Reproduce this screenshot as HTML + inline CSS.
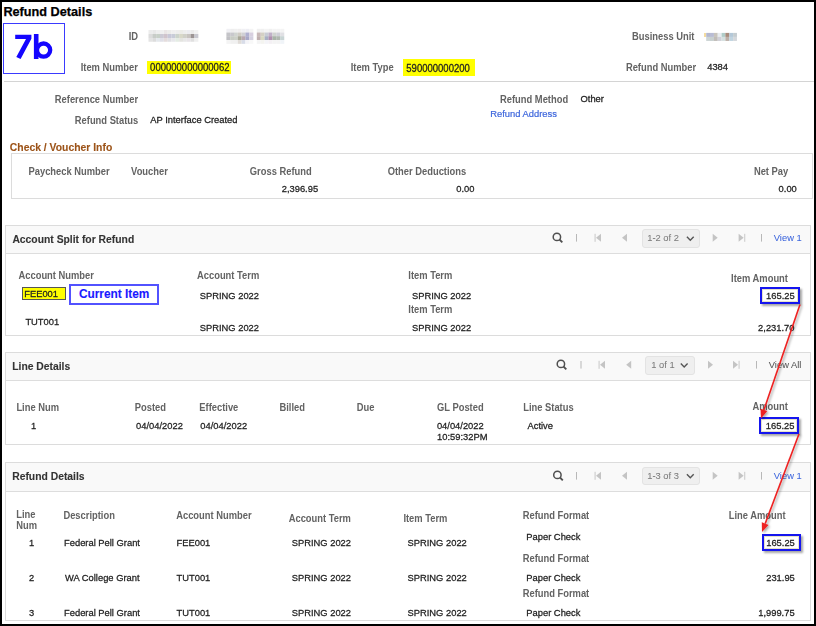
<!DOCTYPE html>
<html><head><meta charset="utf-8"><style>
html,body{margin:0;padding:0;}
body{width:816px;height:626px;position:relative;overflow:hidden;background:#fff;font-family:"Liberation Sans",sans-serif;}
.t{position:absolute;line-height:0;white-space:nowrap;transform-origin:0 0;}
</style></head><body>
<div style="position:absolute;left:0px;top:0px;width:816px;height:626px;box-sizing:border-box;border:2px solid #000;"></div><div style="position:absolute;left:3px;top:23px;width:62px;height:51px;box-sizing:border-box;border:1px solid #3a3aff;"></div><div style="position:absolute;left:4px;top:81px;width:810px;height:1px;background:#d4d4d4;"></div><div style="position:absolute;left:147px;top:61px;width:84px;height:13px;background:#ffff00;"></div><div style="position:absolute;left:402.5px;top:59px;width:72.0px;height:17px;background:#ffff00;"></div><div style="position:absolute;left:11px;top:153px;width:802px;height:46px;box-sizing:border-box;border:1px solid #dcdcdc;"></div><div style="position:absolute;left:5px;top:225px;width:806px;height:111px;box-sizing:border-box;border:1px solid #dcdcdc;"></div><div style="position:absolute;left:6px;top:226px;width:804px;height:27px;background:#f9f9f9;border-bottom:1px solid #dddddd;"></div><div style="position:absolute;left:5px;top:352px;width:806px;height:93px;box-sizing:border-box;border:1px solid #dcdcdc;"></div><div style="position:absolute;left:6px;top:353px;width:804px;height:27px;background:#f9f9f9;border-bottom:1px solid #dddddd;"></div><div style="position:absolute;left:5px;top:462px;width:806px;height:159px;box-sizing:border-box;border:1px solid #dcdcdc;"></div><div style="position:absolute;left:6px;top:463px;width:804px;height:28px;background:#f9f9f9;border-bottom:1px solid #dddddd;"></div><div style="position:absolute;left:22px;top:287px;width:44px;height:13px;box-sizing:border-box;border:1px solid #555;background:#ffff00;"></div><div style="position:absolute;left:69px;top:284px;width:90px;height:21px;box-sizing:border-box;border:2px solid #5252ff;"></div><div style="position:absolute;left:760px;top:287px;width:40px;height:17px;box-sizing:border-box;border:2px solid #1515ee;box-shadow:2px 2px 2px rgba(0,0,0,0.35), inset 0 0 0 1px #e6e2c8;background:#fff;"></div><div style="position:absolute;left:759px;top:417px;width:40px;height:17px;box-sizing:border-box;border:2px solid #1515ee;box-shadow:2px 2px 2px rgba(0,0,0,0.35), inset 0 0 0 1px #e6e2c8;background:#fff;"></div><div style="position:absolute;left:762px;top:534px;width:39px;height:17px;box-sizing:border-box;border:2px solid #1515ee;box-shadow:2px 2px 2px rgba(0,0,0,0.35), inset 0 0 0 1px #e6e2c8;background:#fff;"></div><div style="position:absolute;left:642px;top:229px;width:58px;height:19px;box-sizing:border-box;border:1px solid #e3e3e3;background:#efefef;border-radius:3px;"></div><div style="position:absolute;left:645px;top:356px;width:50px;height:19px;box-sizing:border-box;border:1px solid #e3e3e3;background:#efefef;border-radius:3px;"></div><div style="position:absolute;left:642px;top:467px;width:58px;height:18px;box-sizing:border-box;border:1px solid #e3e3e3;background:#efefef;border-radius:3px;"></div>
<div class="t" style="left:3.40px;top:12px;font-size:12.7px;-webkit-text-stroke:0.25px currentColor;font-weight:bold;color:#000">Refund Details</div><div class="t" style="left:128.70px;top:37px;font-size:9.370px;transform:scale(1.0,1.12);-webkit-text-stroke:0.0px currentColor;font-weight:bold;color:#636363">ID</div><div class="t" style="left:80.70px;top:68px;font-size:9.370px;transform:scale(1.0,1.12);-webkit-text-stroke:0.0px currentColor;font-weight:bold;color:#636363">Item Number</div><div class="t" style="left:150.10px;top:68px;font-size:9.530px;transform:scale(1.0,1.06);-webkit-text-stroke:0.25px currentColor;color:#222222">000000000000062</div><div class="t" style="left:350.70px;top:68px;font-size:9.370px;transform:scale(1.0,1.12);-webkit-text-stroke:0.0px currentColor;font-weight:bold;color:#636363">Item Type</div><div class="t" style="left:406.30px;top:69px;font-size:9.530px;transform:scale(1.0,1.06);-webkit-text-stroke:0.25px currentColor;color:#222222">590000000200</div><div class="t" style="left:632.00px;top:37px;font-size:9.370px;transform:scale(1.0,1.12);-webkit-text-stroke:0.0px currentColor;font-weight:bold;color:#636363">Business Unit</div><div class="t" style="left:625.90px;top:68px;font-size:9.370px;transform:scale(1.0,1.12);-webkit-text-stroke:0.0px currentColor;font-weight:bold;color:#636363">Refund Number</div><div class="t" style="left:707.20px;top:67px;font-size:9.370px;transform:scale(1.0,1.06);-webkit-text-stroke:0.25px currentColor;color:#222222">4384</div><div class="t" style="left:54.80px;top:100px;font-size:9.370px;transform:scale(1.0,1.12);-webkit-text-stroke:0.0px currentColor;font-weight:bold;color:#636363">Reference Number</div><div class="t" style="left:74.80px;top:121px;font-size:9.370px;transform:scale(1.0,1.12);-webkit-text-stroke:0.0px currentColor;font-weight:bold;color:#636363">Refund Status</div><div class="t" style="left:150.30px;top:120px;font-size:9.370px;transform:scale(1.0,1.06);-webkit-text-stroke:0.25px currentColor;color:#222222">AP Interface Created</div><div class="t" style="left:500.00px;top:100px;font-size:9.370px;transform:scale(1.0,1.12);-webkit-text-stroke:0.0px currentColor;font-weight:bold;color:#636363">Refund Method</div><div class="t" style="left:580.50px;top:99px;font-size:9.370px;transform:scale(1.0,1.06);-webkit-text-stroke:0.25px currentColor;color:#222222">Other</div><div class="t" style="left:490.30px;top:114px;font-size:9.370px;transform:scale(1.0,1.06);-webkit-text-stroke:0.2px currentColor;color:#3d66dc">Refund Address</div><div class="t" style="left:9.80px;top:148px;font-size:10.380px;transform:scale(1.0,1.06);-webkit-text-stroke:0.1px currentColor;font-weight:bold;color:#9c5318">Check / Voucher Info</div><div class="t" style="left:28.50px;top:172px;font-size:9.370px;transform:scale(1.0,1.12);-webkit-text-stroke:0.0px currentColor;font-weight:bold;color:#636363">Paycheck Number</div><div class="t" style="left:131.10px;top:172px;font-size:9.370px;transform:scale(1.0,1.12);-webkit-text-stroke:0.0px currentColor;font-weight:bold;color:#636363">Voucher</div><div class="t" style="left:249.80px;top:172px;font-size:9.370px;transform:scale(1.0,1.12);-webkit-text-stroke:0.0px currentColor;font-weight:bold;color:#636363">Gross Refund</div><div class="t" style="left:281.70px;top:189px;font-size:9.370px;transform:scale(1.0,1.06);-webkit-text-stroke:0.25px currentColor;color:#222222">2,396.95</div><div class="t" style="left:387.70px;top:172px;font-size:9.370px;transform:scale(1.0,1.12);-webkit-text-stroke:0.0px currentColor;font-weight:bold;color:#636363">Other Deductions</div><div class="t" style="left:456.30px;top:189px;font-size:9.370px;transform:scale(1.0,1.06);-webkit-text-stroke:0.25px currentColor;color:#222222">0.00</div><div class="t" style="left:753.90px;top:172px;font-size:9.370px;transform:scale(1.0,1.12);-webkit-text-stroke:0.0px currentColor;font-weight:bold;color:#636363">Net Pay</div><div class="t" style="left:778.60px;top:189px;font-size:9.370px;transform:scale(1.0,1.06);-webkit-text-stroke:0.25px currentColor;color:#222222">0.00</div><div class="t" style="left:12.40px;top:240px;font-size:10.350px;transform:scale(1.0,1.06);-webkit-text-stroke:0.1px currentColor;font-weight:bold;color:#333333">Account Split for Refund</div><div class="t" style="left:18.50px;top:276px;font-size:9.370px;transform:scale(1.0,1.12);-webkit-text-stroke:0.0px currentColor;font-weight:bold;color:#636363">Account Number</div><div class="t" style="left:24.20px;top:294px;font-size:9.370px;transform:scale(1.0,1.06);-webkit-text-stroke:0.25px currentColor;color:#222222">FEE001</div><div class="t" style="left:78.90px;top:294px;font-size:11.87px;-webkit-text-stroke:0.1px currentColor;font-weight:bold;color:#1a1aff">Current Item</div><div class="t" style="left:25.40px;top:322px;font-size:9.370px;transform:scale(1.0,1.06);-webkit-text-stroke:0.25px currentColor;color:#222222">TUT001</div><div class="t" style="left:197.00px;top:276px;font-size:9.370px;transform:scale(1.0,1.12);-webkit-text-stroke:0.0px currentColor;font-weight:bold;color:#636363">Account Term</div><div class="t" style="left:199.70px;top:296px;font-size:9.370px;transform:scale(1.0,1.06);-webkit-text-stroke:0.25px currentColor;color:#222222">SPRING 2022</div><div class="t" style="left:408.30px;top:276px;font-size:9.370px;transform:scale(1.0,1.12);-webkit-text-stroke:0.0px currentColor;font-weight:bold;color:#636363">Item Term</div><div class="t" style="left:411.90px;top:296px;font-size:9.370px;transform:scale(1.0,1.06);-webkit-text-stroke:0.25px currentColor;color:#222222">SPRING 2022</div><div class="t" style="left:408.30px;top:310px;font-size:9.370px;transform:scale(1.0,1.12);-webkit-text-stroke:0.0px currentColor;font-weight:bold;color:#636363">Item Term</div><div class="t" style="left:199.70px;top:328px;font-size:9.370px;transform:scale(1.0,1.06);-webkit-text-stroke:0.25px currentColor;color:#222222">SPRING 2022</div><div class="t" style="left:411.90px;top:328px;font-size:9.370px;transform:scale(1.0,1.06);-webkit-text-stroke:0.25px currentColor;color:#222222">SPRING 2022</div><div class="t" style="left:731.10px;top:279px;font-size:9.370px;transform:scale(1.0,1.12);-webkit-text-stroke:0.0px currentColor;font-weight:bold;color:#636363">Item Amount</div><div class="t" style="left:766.10px;top:296px;font-size:9.370px;transform:scale(1.0,1.06);-webkit-text-stroke:0.25px currentColor;color:#222222">165.25</div><div class="t" style="left:758.10px;top:328px;font-size:9.370px;transform:scale(1.0,1.06);-webkit-text-stroke:0.25px currentColor;color:#222222">2,231.70</div><div class="t" style="left:12.20px;top:367px;font-size:10.350px;transform:scale(1.0,1.06);-webkit-text-stroke:0.1px currentColor;font-weight:bold;color:#333333">Line Details</div><div class="t" style="left:16.40px;top:408px;font-size:9.370px;transform:scale(1.0,1.12);-webkit-text-stroke:0.0px currentColor;font-weight:bold;color:#636363">Line Num</div><div class="t" style="left:30.90px;top:426px;font-size:9.370px;transform:scale(1.0,1.06);-webkit-text-stroke:0.25px currentColor;color:#222222">1</div><div class="t" style="left:134.80px;top:408px;font-size:9.370px;transform:scale(1.0,1.12);-webkit-text-stroke:0.0px currentColor;font-weight:bold;color:#636363">Posted</div><div class="t" style="left:136.00px;top:426px;font-size:9.370px;transform:scale(1.0,1.06);-webkit-text-stroke:0.25px currentColor;color:#222222">04/04/2022</div><div class="t" style="left:199.30px;top:408px;font-size:9.370px;transform:scale(1.0,1.12);-webkit-text-stroke:0.0px currentColor;font-weight:bold;color:#636363">Effective</div><div class="t" style="left:200.30px;top:426px;font-size:9.370px;transform:scale(1.0,1.06);-webkit-text-stroke:0.25px currentColor;color:#222222">04/04/2022</div><div class="t" style="left:279.50px;top:408px;font-size:9.370px;transform:scale(1.0,1.12);-webkit-text-stroke:0.0px currentColor;font-weight:bold;color:#636363">Billed</div><div class="t" style="left:356.70px;top:408px;font-size:9.370px;transform:scale(1.0,1.12);-webkit-text-stroke:0.0px currentColor;font-weight:bold;color:#636363">Due</div><div class="t" style="left:437.00px;top:408px;font-size:9.370px;transform:scale(1.0,1.12);-webkit-text-stroke:0.0px currentColor;font-weight:bold;color:#636363">GL Posted</div><div class="t" style="left:436.90px;top:426px;font-size:9.370px;transform:scale(1.0,1.06);-webkit-text-stroke:0.25px currentColor;color:#222222">04/04/2022</div><div class="t" style="left:437.10px;top:437px;font-size:9.370px;transform:scale(1.0,1.06);-webkit-text-stroke:0.25px currentColor;color:#222222">10:59:32PM</div><div class="t" style="left:523.20px;top:408px;font-size:9.370px;transform:scale(1.0,1.12);-webkit-text-stroke:0.0px currentColor;font-weight:bold;color:#636363">Line Status</div><div class="t" style="left:527.50px;top:426px;font-size:9.370px;transform:scale(1.0,1.06);-webkit-text-stroke:0.25px currentColor;color:#222222">Active</div><div class="t" style="left:752.50px;top:407px;font-size:9.370px;transform:scale(1.0,1.12);-webkit-text-stroke:0.0px currentColor;font-weight:bold;color:#636363">Amount</div><div class="t" style="left:765.80px;top:426px;font-size:9.370px;transform:scale(1.0,1.06);-webkit-text-stroke:0.25px currentColor;color:#222222">165.25</div><div class="t" style="left:12.20px;top:477px;font-size:10.350px;transform:scale(1.0,1.06);-webkit-text-stroke:0.1px currentColor;font-weight:bold;color:#333333">Refund Details</div><div class="t" style="left:16.30px;top:515px;font-size:9.370px;transform:scale(1.0,1.12);-webkit-text-stroke:0.0px currentColor;font-weight:bold;color:#636363">Line</div><div class="t" style="left:16.30px;top:526px;font-size:9.370px;transform:scale(1.0,1.12);-webkit-text-stroke:0.0px currentColor;font-weight:bold;color:#636363">Num</div><div class="t" style="left:63.40px;top:516px;font-size:9.370px;transform:scale(1.0,1.12);-webkit-text-stroke:0.0px currentColor;font-weight:bold;color:#636363">Description</div><div class="t" style="left:176.20px;top:516px;font-size:9.370px;transform:scale(1.0,1.12);-webkit-text-stroke:0.0px currentColor;font-weight:bold;color:#636363">Account Number</div><div class="t" style="left:288.70px;top:519px;font-size:9.370px;transform:scale(1.0,1.12);-webkit-text-stroke:0.0px currentColor;font-weight:bold;color:#636363">Account Term</div><div class="t" style="left:403.40px;top:519px;font-size:9.370px;transform:scale(1.0,1.12);-webkit-text-stroke:0.0px currentColor;font-weight:bold;color:#636363">Item Term</div><div class="t" style="left:522.70px;top:516px;font-size:9.370px;transform:scale(1.0,1.12);-webkit-text-stroke:0.0px currentColor;font-weight:bold;color:#636363">Refund Format</div><div class="t" style="left:728.80px;top:516px;font-size:9.370px;transform:scale(1.0,1.12);-webkit-text-stroke:0.0px currentColor;font-weight:bold;color:#636363">Line Amount</div><div class="t" style="left:28.90px;top:543px;font-size:9.370px;transform:scale(1.0,1.06);-webkit-text-stroke:0.25px currentColor;color:#222222">1</div><div class="t" style="left:64.00px;top:543px;font-size:9.370px;transform:scale(1.0,1.06);-webkit-text-stroke:0.25px currentColor;color:#222222">Federal Pell Grant</div><div class="t" style="left:176.50px;top:543px;font-size:9.370px;transform:scale(1.0,1.06);-webkit-text-stroke:0.25px currentColor;color:#222222">FEE001</div><div class="t" style="left:291.70px;top:543px;font-size:9.370px;transform:scale(1.0,1.06);-webkit-text-stroke:0.25px currentColor;color:#222222">SPRING 2022</div><div class="t" style="left:407.50px;top:543px;font-size:9.370px;transform:scale(1.0,1.06);-webkit-text-stroke:0.25px currentColor;color:#222222">SPRING 2022</div><div class="t" style="left:526.30px;top:537px;font-size:9.370px;transform:scale(1.0,1.06);-webkit-text-stroke:0.25px currentColor;color:#222222">Paper Check</div><div class="t" style="left:766.20px;top:543px;font-size:9.370px;transform:scale(1.0,1.06);-webkit-text-stroke:0.25px currentColor;color:#222222">165.25</div><div class="t" style="left:29.10px;top:578px;font-size:9.370px;transform:scale(1.0,1.06);-webkit-text-stroke:0.25px currentColor;color:#222222">2</div><div class="t" style="left:65.00px;top:578px;font-size:9.370px;transform:scale(1.0,1.06);-webkit-text-stroke:0.25px currentColor;color:#222222">WA College Grant</div><div class="t" style="left:176.50px;top:578px;font-size:9.370px;transform:scale(1.0,1.06);-webkit-text-stroke:0.25px currentColor;color:#222222">TUT001</div><div class="t" style="left:291.70px;top:578px;font-size:9.370px;transform:scale(1.0,1.06);-webkit-text-stroke:0.25px currentColor;color:#222222">SPRING 2022</div><div class="t" style="left:407.50px;top:578px;font-size:9.370px;transform:scale(1.0,1.06);-webkit-text-stroke:0.25px currentColor;color:#222222">SPRING 2022</div><div class="t" style="left:526.30px;top:578px;font-size:9.370px;transform:scale(1.0,1.06);-webkit-text-stroke:0.25px currentColor;color:#222222">Paper Check</div><div class="t" style="left:522.70px;top:559px;font-size:9.370px;transform:scale(1.0,1.12);-webkit-text-stroke:0.0px currentColor;font-weight:bold;color:#636363">Refund Format</div><div class="t" style="left:766.20px;top:578px;font-size:9.370px;transform:scale(1.0,1.06);-webkit-text-stroke:0.25px currentColor;color:#222222">231.95</div><div class="t" style="left:29.10px;top:613px;font-size:9.370px;transform:scale(1.0,1.06);-webkit-text-stroke:0.25px currentColor;color:#222222">3</div><div class="t" style="left:64.00px;top:613px;font-size:9.370px;transform:scale(1.0,1.06);-webkit-text-stroke:0.25px currentColor;color:#222222">Federal Pell Grant</div><div class="t" style="left:176.50px;top:613px;font-size:9.370px;transform:scale(1.0,1.06);-webkit-text-stroke:0.25px currentColor;color:#222222">TUT001</div><div class="t" style="left:291.70px;top:613px;font-size:9.370px;transform:scale(1.0,1.06);-webkit-text-stroke:0.25px currentColor;color:#222222">SPRING 2022</div><div class="t" style="left:407.50px;top:613px;font-size:9.370px;transform:scale(1.0,1.06);-webkit-text-stroke:0.25px currentColor;color:#222222">SPRING 2022</div><div class="t" style="left:526.30px;top:613px;font-size:9.370px;transform:scale(1.0,1.06);-webkit-text-stroke:0.25px currentColor;color:#222222">Paper Check</div><div class="t" style="left:522.70px;top:594px;font-size:9.370px;transform:scale(1.0,1.12);-webkit-text-stroke:0.0px currentColor;font-weight:bold;color:#636363">Refund Format</div><div class="t" style="left:758.20px;top:613px;font-size:9.370px;transform:scale(1.0,1.06);-webkit-text-stroke:0.25px currentColor;color:#222222">1,999.75</div><div class="t" style="left:647.20px;top:238px;font-size:9.370px;transform:scale(1.0,1.06);-webkit-text-stroke:0.05px currentColor;color:#7a7a7a">1-2 of 2</div><div class="t" style="left:651.20px;top:365px;font-size:9.370px;transform:scale(1.0,1.06);-webkit-text-stroke:0.05px currentColor;color:#7a7a7a">1 of 1</div><div class="t" style="left:647.20px;top:476px;font-size:9.370px;transform:scale(1.0,1.06);-webkit-text-stroke:0.05px currentColor;color:#7a7a7a">1-3 of 3</div><div class="t" style="left:773.80px;top:238px;font-size:9.370px;transform:scale(1.0,1.06);-webkit-text-stroke:0.05px currentColor;color:#3d66dc">View 1</div><div class="t" style="left:768.80px;top:365px;font-size:9.370px;transform:scale(1.0,1.06);-webkit-text-stroke:0.05px currentColor;color:#555555">View All</div><div class="t" style="left:773.80px;top:476px;font-size:9.370px;transform:scale(1.0,1.06);-webkit-text-stroke:0.05px currentColor;color:#3d66dc">View 1</div>
<svg width="816" height="626" style="position:absolute;left:0;top:0">
<defs><filter id="bl" x="-10%" y="-30%" width="120%" height="160%"><feGaussianBlur stdDeviation="0.7"/></filter><filter id="sh" x="-20%" y="-20%" width="140%" height="140%"><feDropShadow dx="1.5" dy="1.5" stdDeviation="0.8" flood-color="#000" flood-opacity="0.35"/></filter></defs>
<g filter="url(#bl)"><rect x="148.5" y="30" width="3.88" height="4.05" fill="#ececec"/><rect x="152.33" y="30" width="3.88" height="4.05" fill="#e8e8e8"/><rect x="156.16" y="30" width="3.88" height="4.05" fill="#eeeeee"/><rect x="159.99" y="30" width="3.88" height="4.05" fill="#f0f0f0"/><rect x="163.82" y="30" width="3.88" height="4.05" fill="#eae6e6"/><rect x="167.65" y="30" width="3.88" height="4.05" fill="#ececea"/><rect x="171.48" y="30" width="3.89" height="4.05" fill="#f0f0f0"/><rect x="175.32" y="30" width="3.88" height="4.05" fill="#eeeeee"/><rect x="179.15" y="30" width="3.88" height="4.05" fill="#ecece8"/><rect x="182.98" y="30" width="3.88" height="4.05" fill="#eeeeee"/><rect x="186.81" y="30" width="3.88" height="4.05" fill="#ececf0"/><rect x="190.64" y="30" width="3.88" height="4.05" fill="#ebebeb"/><rect x="194.47" y="30" width="3.88" height="4.05" fill="#f2f2f2"/><rect x="148.5" y="34" width="3.88" height="4.05" fill="#dcdcdc"/><rect x="152.33" y="34" width="3.88" height="4.05" fill="#c8ccc8"/><rect x="156.16" y="34" width="3.88" height="4.05" fill="#c8d0c8"/><rect x="159.99" y="34" width="3.88" height="4.05" fill="#cccad4"/><rect x="163.82" y="34" width="3.88" height="4.05" fill="#d0c4cc"/><rect x="167.65" y="34" width="3.88" height="4.05" fill="#c8c8d8"/><rect x="171.48" y="34" width="3.89" height="4.05" fill="#c8ccd8"/><rect x="175.32" y="34" width="3.88" height="4.05" fill="#ccd4cc"/><rect x="179.15" y="34" width="3.88" height="4.05" fill="#d8d8c8"/><rect x="182.98" y="34" width="3.88" height="4.05" fill="#d0d0c8"/><rect x="186.81" y="34" width="3.88" height="4.05" fill="#c8c4c0"/><rect x="190.64" y="34" width="3.88" height="4.05" fill="#9c9494"/><rect x="194.47" y="34" width="3.88" height="4.05" fill="#c8c8d0"/><rect x="148.5" y="38" width="3.88" height="3.75" fill="#e4e4e4"/><rect x="152.33" y="38" width="3.88" height="3.75" fill="#dcdcdc"/><rect x="156.16" y="38" width="3.88" height="3.75" fill="#e4e8ec"/><rect x="159.99" y="38" width="3.88" height="3.75" fill="#e0e0e8"/><rect x="163.82" y="38" width="3.88" height="3.75" fill="#e4dcdc"/><rect x="167.65" y="38" width="3.88" height="3.75" fill="#e0e0e4"/><rect x="171.48" y="38" width="3.89" height="3.75" fill="#e8e8ec"/><rect x="175.32" y="38" width="3.88" height="3.75" fill="#e4ece4"/><rect x="179.15" y="38" width="3.88" height="3.75" fill="#e4e4e0"/><rect x="182.98" y="38" width="3.88" height="3.75" fill="#e8e8e8"/><rect x="186.81" y="38" width="3.88" height="3.75" fill="#e8e4e8"/><rect x="190.64" y="38" width="3.88" height="3.75" fill="#e0e0e0"/><rect x="194.47" y="38" width="3.88" height="3.75" fill="#f0f0f0"/><rect x="226.4" y="28.8" width="3.85" height="3.75" fill="#f0f0f4"/><rect x="230.2" y="28.8" width="3.85" height="3.75" fill="#eeeeee"/><rect x="234.0" y="28.8" width="3.85" height="3.75" fill="#f0f0f0"/><rect x="237.8" y="28.8" width="3.85" height="3.75" fill="#f0eeee"/><rect x="241.6" y="28.8" width="3.85" height="3.75" fill="#f0f0f4"/><rect x="245.4" y="28.8" width="3.85" height="3.75" fill="#eeeef4"/><rect x="249.2" y="28.8" width="4.15" height="3.75" fill="#f4f4f4"/><rect x="226.4" y="32.5" width="3.85" height="3.75" fill="#c4c4c8"/><rect x="230.2" y="32.5" width="3.85" height="3.75" fill="#c8c8cc"/><rect x="234.0" y="32.5" width="3.85" height="3.75" fill="#d0d4d0"/><rect x="237.8" y="32.5" width="3.85" height="3.75" fill="#d0ccc4"/><rect x="241.6" y="32.5" width="3.85" height="3.75" fill="#d0d0d4"/><rect x="245.4" y="32.5" width="3.85" height="3.75" fill="#b0b0d0"/><rect x="249.2" y="32.5" width="4.15" height="3.75" fill="#d8d0e0"/><rect x="226.4" y="36.2" width="3.85" height="3.85" fill="#c0c0c4"/><rect x="230.2" y="36.2" width="3.85" height="3.85" fill="#c8ccc4"/><rect x="234.0" y="36.2" width="3.85" height="3.85" fill="#ccd0c8"/><rect x="237.8" y="36.2" width="3.85" height="3.85" fill="#a8a898"/><rect x="241.6" y="36.2" width="3.85" height="3.85" fill="#b8a8b0"/><rect x="245.4" y="36.2" width="3.85" height="3.85" fill="#a8a8c8"/><rect x="249.2" y="36.2" width="4.15" height="3.85" fill="#d4d0e0"/><rect x="226.4" y="40" width="3.85" height="3.85" fill="#f4f4f4"/><rect x="230.2" y="40" width="3.85" height="3.85" fill="#f0f0f0"/><rect x="234.0" y="40" width="3.85" height="3.85" fill="#f0f0f0"/><rect x="237.8" y="40" width="3.85" height="3.85" fill="#e0dcd8"/><rect x="241.6" y="40" width="3.85" height="3.85" fill="#d8dce8"/><rect x="245.4" y="40" width="3.85" height="3.85" fill="#f4f4f8"/><rect x="249.2" y="40" width="4.15" height="3.85" fill="#f8f8f8"/><rect x="256.8" y="28.8" width="3.95" height="3.75" fill="#f0f0f0"/><rect x="260.7" y="28.8" width="3.95" height="3.75" fill="#f0f0f0"/><rect x="264.6" y="28.8" width="3.95" height="3.75" fill="#f4f4f4"/><rect x="268.5" y="28.8" width="3.95" height="3.75" fill="#f0f0f0"/><rect x="272.4" y="28.8" width="3.95" height="3.75" fill="#f4f4f4"/><rect x="276.3" y="28.8" width="3.95" height="3.75" fill="#f4f4f4"/><rect x="280.2" y="28.8" width="4.05" height="3.75" fill="#f4f4f4"/><rect x="256.8" y="32.5" width="3.95" height="3.75" fill="#c8b8b8"/><rect x="260.7" y="32.5" width="3.95" height="3.75" fill="#d4d0c4"/><rect x="264.6" y="32.5" width="3.95" height="3.75" fill="#c8ccd4"/><rect x="268.5" y="32.5" width="3.95" height="3.75" fill="#c0b0c8"/><rect x="272.4" y="32.5" width="3.95" height="3.75" fill="#d0d4d0"/><rect x="276.3" y="32.5" width="3.95" height="3.75" fill="#d0d0d8"/><rect x="280.2" y="32.5" width="4.05" height="3.75" fill="#e0e0e4"/><rect x="256.8" y="36.2" width="3.95" height="3.85" fill="#c0b0b0"/><rect x="260.7" y="36.2" width="3.95" height="3.85" fill="#d8d8c0"/><rect x="264.6" y="36.2" width="3.95" height="3.85" fill="#a8b0c4"/><rect x="268.5" y="36.2" width="3.95" height="3.85" fill="#b090b0"/><rect x="272.4" y="36.2" width="3.95" height="3.85" fill="#a8b4a8"/><rect x="276.3" y="36.2" width="3.95" height="3.85" fill="#b0b8b0"/><rect x="280.2" y="36.2" width="4.05" height="3.85" fill="#c8d4d4"/><rect x="256.8" y="40" width="3.95" height="3.85" fill="#f4f4f4"/><rect x="260.7" y="40" width="3.95" height="3.85" fill="#f4f4f0"/><rect x="264.6" y="40" width="3.95" height="3.85" fill="#f4f4f8"/><rect x="268.5" y="40" width="3.95" height="3.85" fill="#f4f0f4"/><rect x="272.4" y="40" width="3.95" height="3.85" fill="#f4f4f4"/><rect x="276.3" y="40" width="3.95" height="3.85" fill="#f4f4f4"/><rect x="280.2" y="40" width="4.05" height="3.85" fill="#f0f4f8"/><rect x="706.2" y="32.9" width="3.85" height="4.05" fill="#b4b8d0"/><rect x="710.0" y="32.9" width="3.95" height="4.05" fill="#b8bcd4"/><rect x="713.9" y="32.9" width="3.85" height="4.05" fill="#c8c4bc"/><rect x="717.7" y="32.9" width="3.95" height="4.05" fill="#e8ecf0"/><rect x="721.6" y="32.9" width="3.85" height="4.05" fill="#b0ccc8"/><rect x="725.4" y="32.9" width="3.95" height="4.05" fill="#a88c7c"/><rect x="729.3" y="32.9" width="3.85" height="4.05" fill="#b4c8d8"/><rect x="733.1" y="32.9" width="3.85" height="4.05" fill="#c4ccd0"/><rect x="706.2" y="36.9" width="3.85" height="4.05" fill="#ccd4d4"/><rect x="710.0" y="36.9" width="3.95" height="4.05" fill="#c8d0d0"/><rect x="713.9" y="36.9" width="3.85" height="4.05" fill="#c0bcb8"/><rect x="717.7" y="36.9" width="3.95" height="4.05" fill="#d0d0d8"/><rect x="721.6" y="36.9" width="3.85" height="4.05" fill="#d4e0e0"/><rect x="725.4" y="36.9" width="3.95" height="4.05" fill="#bcb0a8"/><rect x="729.3" y="36.9" width="3.85" height="4.05" fill="#c0d4e0"/><rect x="733.1" y="36.9" width="3.85" height="4.05" fill="#d4d8dc"/><rect x="704" y="33" width="2" height="4" fill="#f4dca0"/></g>
<circle cx="556.9" cy="236.9" r="3.7" fill="none" stroke="#505050" stroke-width="1.5"/><line x1="559.5" y1="239.5" x2="562.3" y2="242.3" stroke="#505050" stroke-width="1.8"/><rect x="576" y="234.0" width="1" height="7.6" fill="#b8b8b8"/><rect x="761" y="234.0" width="1" height="7.6" fill="#b8b8b8"/><rect x="594.5" y="233.8" width="1.2" height="8" fill="#d0d0d0"/><path d="M601.0 233.8 L596.0 237.8 L601.0 241.8 Z" fill="#c4c4c4"/><path d="M627 233.8 L622 237.8 L627 241.8 Z" fill="#c4c4c4"/><path d="M712.7 233.8 L717.7 237.8 L712.7 241.8 Z" fill="#c4c4c4"/><path d="M738.6 233.8 L743.6 237.8 L738.6 241.8 Z" fill="#c4c4c4"/><rect x="744.1" y="233.8" width="1.2" height="8" fill="#d0d0d0"/><circle cx="560.9" cy="363.90000000000003" r="3.7" fill="none" stroke="#505050" stroke-width="1.5"/><line x1="563.5" y1="366.50000000000006" x2="566.3" y2="369.3" stroke="#505050" stroke-width="1.8"/><rect x="580.5" y="361.0" width="1" height="7.6" fill="#b8b8b8"/><rect x="756" y="361.0" width="1" height="7.6" fill="#b8b8b8"/><rect x="598.5" y="360.8" width="1.2" height="8" fill="#d0d0d0"/><path d="M605.0 360.8 L600.0 364.8 L605.0 368.8 Z" fill="#c4c4c4"/><path d="M631.2 360.8 L626.2 364.8 L631.2 368.8 Z" fill="#c4c4c4"/><path d="M708 360.8 L713 364.8 L708 368.8 Z" fill="#c4c4c4"/><path d="M733 360.8 L738 364.8 L733 368.8 Z" fill="#c4c4c4"/><rect x="738.5" y="360.8" width="1.2" height="8" fill="#d0d0d0"/><circle cx="557.4" cy="474.90000000000003" r="3.7" fill="none" stroke="#505050" stroke-width="1.5"/><line x1="560.0" y1="477.50000000000006" x2="562.8" y2="480.3" stroke="#505050" stroke-width="1.8"/><rect x="576" y="472.0" width="1" height="7.6" fill="#b8b8b8"/><rect x="761" y="472.0" width="1" height="7.6" fill="#b8b8b8"/><rect x="594.5" y="471.8" width="1.2" height="8" fill="#d0d0d0"/><path d="M601.0 471.8 L596.0 475.8 L601.0 479.8 Z" fill="#c4c4c4"/><path d="M627 471.8 L622 475.8 L627 479.8 Z" fill="#c4c4c4"/><path d="M712.7 471.8 L717.7 475.8 L712.7 479.8 Z" fill="#c4c4c4"/><path d="M738.6 471.8 L743.6 475.8 L738.6 479.8 Z" fill="#c4c4c4"/><rect x="744.1" y="471.8" width="1.2" height="8" fill="#d0d0d0"/><path d="M686.9 236.85000000000002 L690.3000000000001 240.25 L693.7 236.85000000000002" fill="none" stroke="#555" stroke-width="1.4"/><path d="M680.8 363.55 L684.2 366.95 L687.6 363.55" fill="none" stroke="#555" stroke-width="1.4"/><path d="M686.9 474.3 L690.3000000000001 477.7 L693.7 474.3" fill="none" stroke="#555" stroke-width="1.4"/><path d="M15.2 34.8 H31.4 V38.8 L20.6 58.9 L16.3 57.0 L26.0 38.9 H15.2 Z" fill="#1405ff"/><rect x="33.9" y="34" width="4.6" height="25" fill="#1405ff"/><ellipse cx="43.6" cy="50.1" rx="6.6" ry="6.6" fill="none" stroke="#1405ff" stroke-width="4.3"/><g filter="url(#sh)"><line x1="800" y1="304.5" x2="763.9" y2="410.0" stroke="#ee2020" stroke-width="1.6"/><path d="M761 418.5 L760.5 408.8 L767.3 411.1 Z" fill="#ee2020"/><line x1="799" y1="434" x2="765.2" y2="523.6" stroke="#ee2020" stroke-width="1.6"/><path d="M762 532 L761.8 522.3 L768.5 524.9 Z" fill="#ee2020"/></g>
</svg>
</body></html>
